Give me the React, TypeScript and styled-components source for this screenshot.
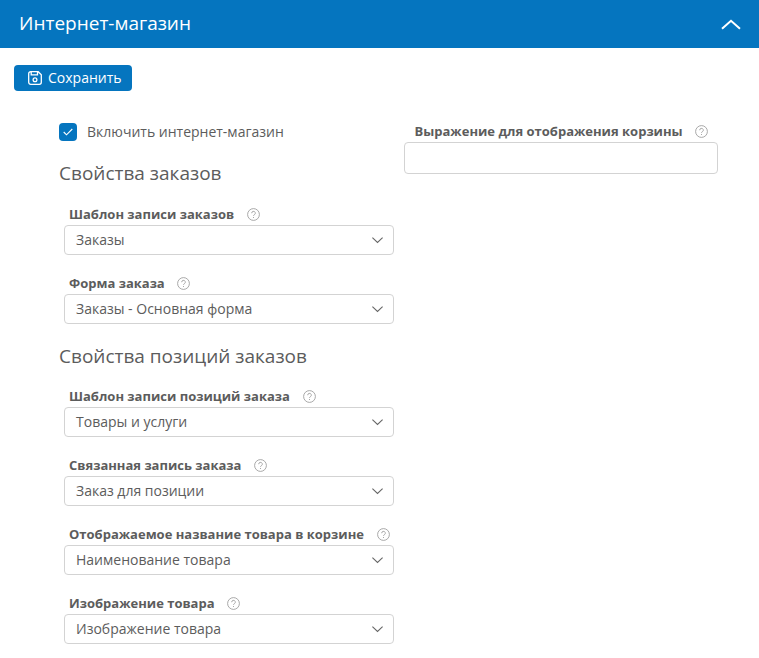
import React from "react";
import styled, { createGlobalStyle } from "styled-components";

const Global = createGlobalStyle`
  * { box-sizing: border-box; }
  body { margin: 0; background: #fff; color: #5c5c5c; font-family: "Open Sans", sans-serif; font-size: 14px; }
`;
const Header = styled.header`
  height: 48px; padding: 0 18px 0 19px; background: #0575bf; color: #fff;
  display: flex; align-items: center; justify-content: space-between;
  font-size: 19px; line-height: 46px;
`;
const Title = styled.div`height: 48px;`;
const Toolbar = styled.div`padding: 17px 14px 0; height: 74px;`;
const Button = styled.button`
  display: flex; align-items: center; gap: 6px; width: 118px; height: 26px; padding: 0 0 0 14px;
  border: 0; border-radius: 4px; background: #0575bf; color: #fff; font: 14px "Open Sans", sans-serif;
`;
const Text = styled.span`display: block; padding-bottom: 2px;`;
const Columns = styled.main`display: grid; grid-template-columns: 345px 314px; padding-left: 59px;`;
const Column = styled.section``;
const CheckRow = styled.label`display: flex; align-items: center; height: 20px; gap: 10px; font-size: 14px;`;
const Box = styled.span`
  width: 18px; height: 18px; border-radius: 4px; background: #0575bf;
  display: flex; align-items: center; justify-content: center;
`;
const Heading = styled.h2<{ $top: number; $height: number }>`
  margin: ${p => p.$top}px 0 0; height: ${p => p.$height}px; font-weight: 400; font-size: 19px; line-height: 26px;
`;
const Field = styled.div`margin: 18px 0 0 5px; width: 330px;`;
const Label = styled.div`
  display: flex; align-items: center; gap: 12.7px; height: 20px; padding-left: 5px;
  font-size: 13px; font-weight: 700; white-space: nowrap;
`;
const Select = styled.div`
  display: flex; align-items: center; justify-content: space-between; height: 30px; margin-top: 1px;
  border: 1px solid #d3d3d3; border-radius: 4px; padding: 0 10px 0 11px; font-size: 14px;
`;
const RightLabel = styled(Label)`height: 18px; margin-bottom: 2px; padding-left: 10.5px;`;
const Input = styled.input`
  display: block; width: 314px; height: 32px; border: 1px solid #d3d3d3; border-radius: 4px;
`;

const Help = () => (
  <svg width="13" height="13" viewBox="0 0 13 13" fill="none" stroke="#999" strokeWidth="0.85">
    <circle cx="6.5" cy="6.5" r="5.9" />
    <path d="M4.700 5.200a1.800 1.800 0 1 1 2.700 1.500c-.6.4-.9.6-.9 1.200M6.500 9v1" />
  </svg>
);
const Chevron = () => (
  <svg width="11" height="8" viewBox="0 0 11 8" fill="none" stroke="#666" strokeWidth="1.1">
    <path d="M.4 1.700 5.500 6.500l5.100-4.800" />
  </svg>
);

type Item = { label: string; value: string };
const orders: Item[] = [
  { label: "Шаблон записи заказов", value: "Заказы" },
  { label: "Форма заказа", value: "Заказы - Основная форма" },
];
const positions: Item[] = [
  { label: "Шаблон записи позиций заказа", value: "Товары и услуги" },
  { label: "Связанная запись заказа", value: "Заказ для позиции" },
  { label: "Отображаемое название товара в корзине", value: "Наименование товара" },
  { label: "Изображение товара", value: "Изображение товара" },
];
const Fields = ({ items }: { items: Item[] }) => (
  <>
    {items.map((f) => (
      <Field key={f.label}>
        <Label>{f.label}<Help /></Label>
        <Select><Text>{f.value}</Text><Chevron /></Select>
      </Field>
    ))}
  </>
);

export default function App() {
  return (
    <>
      <Global />
      <Header>
        <Title>Интернет-магазин</Title>
        <svg width="20" height="12" viewBox="0 0 20 12" fill="none" stroke="#fff" strokeWidth="2">
          <path d="M1 10.800 10 2.800l9 8" />
        </svg>
      </Header>
      <Toolbar>
        <Button>
          <svg width="14" height="14" viewBox="0 0 14 14" fill="none" stroke="#fff" strokeWidth="1.300">
            <path d="M2.700.7h7.500l3.100 3.100v7.500a2 2 0 0 1-2 2H2.700a2 2 0 0 1-2-2V2.700a2 2 0 0 1 2-2ZM3.200.7v3.200h6.300V.7" />
            <circle cx="7" cy="8.700" r="1.900" />
          </svg>
          <Text>Сохранить</Text>
        </Button>
      </Toolbar>
      <Columns>
        <Column>
          <CheckRow>
            <Box>
              <svg width="10" height="8" viewBox="0 0 10 8" fill="none" stroke="#fff" strokeWidth="1.1">
                <path d="m.7 4 2.800 2.800L9.300 1" />
              </svg>
            </Box>
            <Text>Включить интернет-магазин</Text>
          </CheckRow>
          <Heading $top={18} $height={26}>Свойства заказов</Heading>
          <Fields items={orders} />
          <Heading $top={19} $height={25}>Свойства позиций заказов</Heading>
          <Fields items={positions} />
        </Column>
        <Column>
          <RightLabel>Выражение для отображения корзины<Help /></RightLabel>
          <Input />
        </Column>
      </Columns>
    </>
  );
}
